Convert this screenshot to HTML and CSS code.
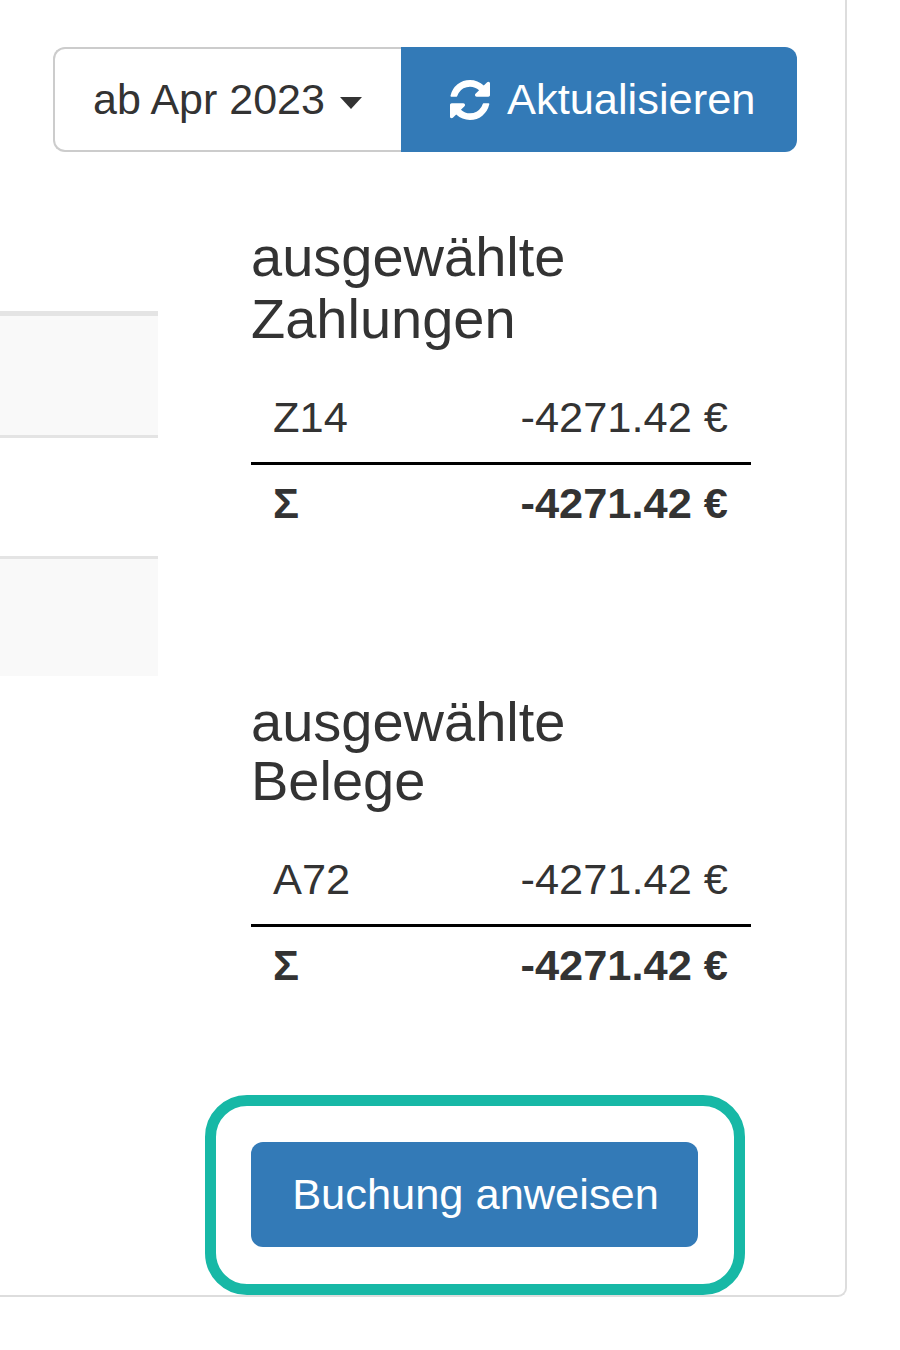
FILE: index.html
```html
<!DOCTYPE html>
<html lang="de">

<head>
    <meta charset="UTF-8">
    <title>Buchung</title>
    <link rel="stylesheet" href="styles.css">
</head>

<body>
    <div class="panel">
        <div class="toolbar">
            <button class="btn btn-month">ab Apr 2023<span class="caret"></span></button>
            <button class="btn btn-refresh">
                <svg class="icon-refresh" viewBox="0 0 1536 1536" aria-hidden="true">
                    <path fill="currentColor" d="M1511 928q0 5-1 7-64 268-268 434.5t-478 166.5q-146 0-282.5-55t-243.5-157l-129 129q-19 19-45 19t-45-19-19-45v-448q0-26 19-45t45-19h448q26 0 45 19t19 45-19 45l-137 137q71 66 161 102t187 36q134 0 250-65t186-179q11-17 53-117 8-23 30-23h192q13 0 22.5 9.5t9.5 22.5zm25-800v448q0 26-19 45t-45 19h-448q-26 0-45-19t-19-45 19-45l138-138q-148-137-349-137-134 0-250 65t-186 179q-11 17-53 117-8 23-30 23h-199q-13 0-22.5-9.5t-9.5-22.5v-7q65-268 270-434.5t480-166.5q146 0 284 55.5t245 156.5l130-129q19-19 45-19t45 19 19 45z"/>
                </svg>Aktualisieren
            </button>
        </div>

        <div class="content">
            <div class="list">
                <div class="list-row list-row-odd"></div>
                <div class="list-row"></div>
                <div class="list-row list-row-odd list-row-last"></div>
            </div>

            <div class="summary">
                <h3>ausgewählte<br>Zahlungen</h3>
                <table class="sum-table">
                    <tr>
                        <td>Z14</td>
                        <td class="amount">-4271.42 €</td>
                    </tr>
                    <tr class="sum-row">
                        <td>Σ</td>
                        <td class="amount">-4271.42 €</td>
                    </tr>
                </table>

                <h3 class="second-title">ausgewählte<br>Belege</h3>
                <table class="sum-table">
                    <tr>
                        <td>A72</td>
                        <td class="amount">-4271.42 €</td>
                    </tr>
                    <tr class="sum-row">
                        <td>Σ</td>
                        <td class="amount">-4271.42 €</td>
                    </tr>
                </table>

                <div class="highlight">
                    <button class="btn btn-book">Buchung anweisen</button>
                </div>
            </div>
        </div>
    </div>
</body>

</html>
```

FILE: styles.css
```css
body {
    margin: 0;
    background-color: #fff;
    color: #333;
    font-family: "Liberation Sans", Arial, sans-serif;
    font-size: 43.4px;
    overflow: hidden;
}

.panel {
    box-sizing: border-box;
    width: 847px;
    height: 1297px;
    padding-top: 47px;
    border-right: 2px solid #ddd;
    border-bottom: 2px solid #ddd;
    border-bottom-right-radius: 9px;
}

.toolbar {
    display: flex;
    justify-content: flex-end;
    padding-right: 48px;
}

.btn {
    box-sizing: border-box;
    height: 105px;
    font-family: inherit;
    font-size: 43.4px;
    cursor: pointer;
}

.btn-month {
    width: 348px;
    padding: 0 0 0 38px;
    text-align: left;
    font-size: 43px;
    color: #333;
    background-color: #fff;
    border: 2px solid #ccc;
    border-right: none;
    border-radius: 12px 0 0 12px;
}

.caret {
    display: inline-block;
    margin-left: 15px;
    vertical-align: middle;
    border-top: 12px solid #333;
    border-left: 11px solid transparent;
    border-right: 11px solid transparent;
}

.btn-refresh {
    display: flex;
    align-items: center;
    width: 396px;
    padding: 0 0 0 49px;
    color: #fff;
    background-color: #337ab7;
    border: none;
    border-radius: 0 12px 12px 0;
}

.icon-refresh {
    width: 40px;
    height: 40px;
    margin-right: 17px;
}

.content {
    display: grid;
    grid-template-columns: 158px 500px;
    column-gap: 93px;
}

.list {
    padding-top: 159px;
}

.list-row {
    box-sizing: border-box;
    height: 121px;
    border-top: 3px solid #e4e4e4;
}

.list-row-odd {
    background-color: #f9f9f9;
}

.list-row:first-child {
    height: 124px;
    border-top-width: 5px;
}

.list-row-last {
    height: 120px;
}

.summary {
    padding-top: 74px;
}

h3 {
    margin: 0;
    font-size: 56px;
    font-weight: normal;
    line-height: 62px;
}

.second-title {
    margin-top: 143px;
    padding-bottom: 2px;
    line-height: 59px;
}

.sum-table {
    width: 100%;
    margin-top: 24px;
    border-collapse: collapse;
}

.sum-table td {
    height: 89px;
    padding: 0 23px 0 22px;
    box-sizing: border-box;
    vertical-align: middle;
}

.amount {
    text-align: right;
}

.sum-row td {
    height: 86px;
    padding-bottom: 6px;
    border-top: 3px solid #000;
    font-weight: bold;
}

.highlight {
    display: inline-block;
    margin: 84px 0 0 -46px;
    padding: 36px 36px 37px 35px;
    border: 11px solid #17b8a6;
    border-radius: 42px;
}

.btn-book {
    display: block;
    width: 447px;
    padding: 0 0 0 2px;
    color: #fff;
    background-color: #337ab7;
    border: none;
    border-radius: 12px;
}
```
